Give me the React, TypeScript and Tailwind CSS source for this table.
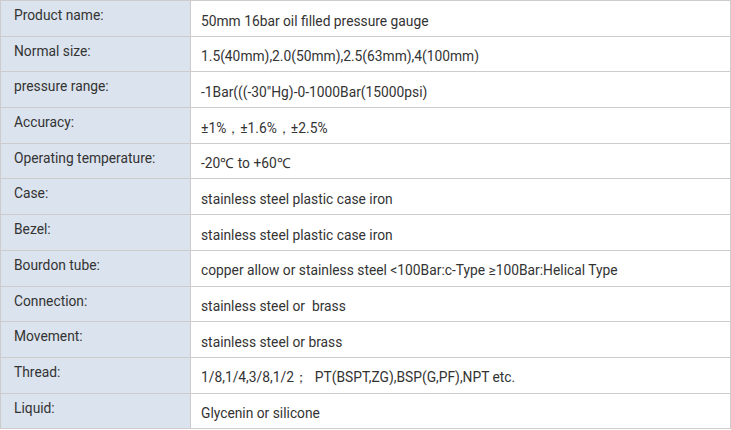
const rows: [string, string][] = [
  ["Product name:", "50mm 16bar oil filled pressure gauge"],
  ["Normal size:", "1.5(40mm),2.0(50mm),2.5(63mm),4(100mm)"],
  ["pressure range:", "-1Bar(((-30\"Hg)-0-1000Bar(15000psi)"],
  ["Accuracy:", "±1%，±1.6%，±2.5%"],
  ["Operating temperature:", "-20℃ to +60℃"],
  ["Case:", "stainless steel plastic case iron"],
  ["Bezel:", "stainless steel plastic case iron"],
  ["Bourdon tube:", "copper allow or stainless steel <100Bar:c-Type ≥100Bar:Helical Type"],
  ["Connection:", "stainless steel or  brass"],
  ["Movement:", "stainless steel or brass"],
  ["Thread:", "1/8,1/4,3/8,1/2；  PT(BSPT,ZG),BSP(G,PF),NPT etc."],
  ["Liquid:", "Glycenin or silicone"],
];

export default function App() {
  return (
    <div className="min-h-screen bg-white font-['Roboto',sans-serif] text-[13.8px] text-[#333]">
      <table className="w-[731px] table-fixed border-collapse">
        <colgroup>
          <col className="w-[190px]" />
          <col />
        </colgroup>
        <tbody>
          {rows.map(([label, value]) => (
            <tr key={label} className="h-[35.7px]">
              <td className="border border-[#cccccc] bg-[#dbe3ee] px-[13px] pb-[6px] align-middle whitespace-pre">
                {label}
              </td>
              <td className="border border-[#cccccc] bg-white pl-[10px] pr-[11px] pt-[5px] align-middle whitespace-pre">
                {value}
              </td>
            </tr>
          ))}
        </tbody>
      </table>
    </div>
  );
}
